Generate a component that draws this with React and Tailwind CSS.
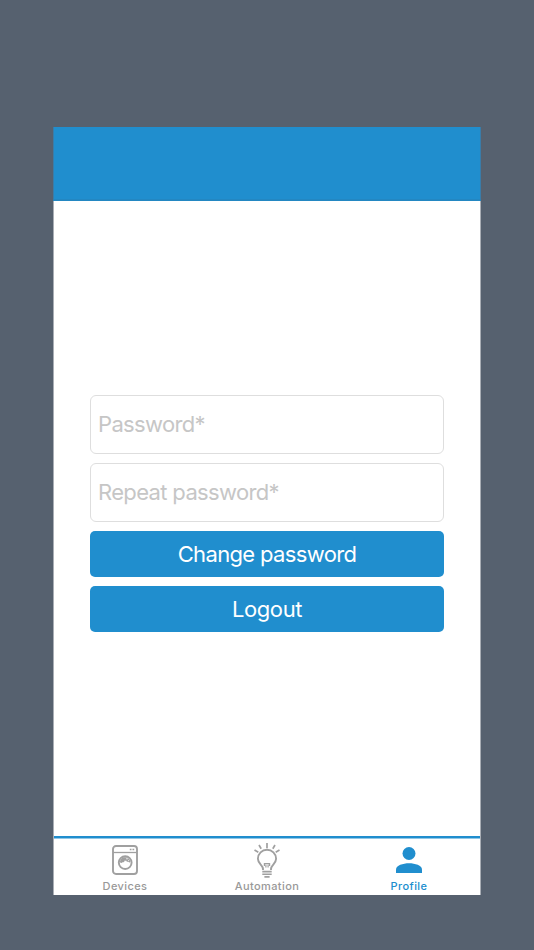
function DevicesIcon() {
  return (
    <svg className="-ml-px" width="26" height="30" viewBox="0 0 26 30" fill="none" stroke="#a0a0a0" strokeWidth="1.9">
      <rect x="1" y="1" width="24" height="28" rx="3" />
      <path d="M1 7.5H25" strokeWidth="1.3" />
      <path d="M17.800 4.500H19.500M20.500 4.500H22.200" strokeWidth="1.5" />
      <circle cx="13.200" cy="17.600" r="6.400" />
      <path d="M8 17.200C8 14.300 10.200 12.200 13 12.200C16 12.200 18.400 14.400 18.500 17C17.900 17.700 16.800 17.500 16.500 16.700C15.300 17.100 14.300 16.500 14.200 15.400C13.700 15.700 13.100 15.700 12.700 15.500C12.600 16.800 11.600 17.500 10.500 17.200C10 18.100 8.600 18.300 8 17.200Z" fill="#a0a0a0" stroke="none" />
      <circle cx="15" cy="13.800" r="0.700" fill="#ffffff" stroke="none" />
      <circle cx="16.700" cy="15.600" r="0.500" fill="#ffffff" stroke="none" />
    </svg>
  );
}

function AutomationIcon() {
  return (
    <svg width="26" height="36" viewBox="0 0 26 36" fill="none" stroke="#a0a0a0" strokeWidth="1.9">
      <path d="M13 1V6.200M5 3L7.200 6.800M21 3L18.800 6.800M.5 8L4.300 10.300M25.500 8L21.700 10.300" strokeWidth="1.700" />
      <path d="M9 28V26.800C8.700 23.200 3.900 21.700 3.900 16.800A9.100 9.100 0 0 1 22.100 16.800C22.100 21.700 17.300 23.200 17 26.800V28" />
      <path d="M11.900 25.600V22.200M14.100 25.600V22.200M10.400 24V21.500H15.600V24" strokeWidth="1.200" />
      <path d="M8.300 29.600H17.700M8.300 32.200H17.700M10.400 34.900H15.600" strokeWidth="1.600" />
    </svg>
  );
}

function ProfileIcon() {
  return (
    <svg width="26" height="26" viewBox="0 0 26 26" fill="#208ece">
      <circle cx="13" cy="6.500" r="6.500" />
      <path d="M0 26V22.500C0 18.400 7 16.200 13 16.200S26 18.400 26 22.500V26Z" />
    </svg>
  );
}

function Tab({ label, icon, active }) {
  return (
    <button className="flex flex-1 flex-col items-center">
      <span className="flex h-[39px] items-center justify-center pt-[5px]">{icon}</span>
      <span className={`mt-[2px] text-[11px] leading-[14px] font-medium tracking-[0.4px] ${active ? "text-[#208ece]" : "text-[#999999]"}`}>
        {label}
      </span>
    </button>
  );
}

function Field({ placeholder }) {
  return (
    <input
      type="text"
      placeholder={placeholder}
      className="block h-[59px] w-full rounded-[6px] border border-[#dedede] bg-white px-[7px] pb-[2px] text-[22px] tracking-[-0.65px] text-[#333333] placeholder:text-[#c6c6c6]"
    />
  );
}

function Button({ children, tracking }) {
  return (
    <button className={`h-[46px] w-full rounded-[5px] bg-[#208ece] text-[22px] leading-[46px] text-white ${tracking}`}>
      {children}
    </button>
  );
}

export default function App() {
  return (
    <div className="h-[950px] w-[534px] bg-[#56616f] pt-[127px] pl-[53px] font-['Inter','Liberation_Sans',sans-serif]">
      <div className="flex h-[768px] w-[428px] flex-col border-x border-[#a9aeb5] bg-white">
        <header className="-mx-px h-[74px] shrink-0 border-x border-b-2 border-x-[#3a7ca8] border-b-[#2387c2] bg-[#208ece]" />
        <main className="flex flex-1 flex-col px-9 pt-[194px]">
          <div className="flex flex-col gap-[9px]">
            <Field placeholder="Password*" />
            <Field placeholder="Repeat password*" />
            <Button tracking="tracking-[-0.65px]">Change password</Button>
            <Button tracking="tracking-[-0.4px]">Logout</Button>
          </div>
        </main>
        <nav className="flex h-[59px] shrink-0 border-t-2 border-[#208ece] shadow-[inset_0_1px_0_#90c7e7]">
          <Tab label="Devices" icon={<DevicesIcon />} />
          <Tab label="Automation" icon={<AutomationIcon />} />
          <Tab label="Profile" icon={<ProfileIcon />} active />
        </nav>
      </div>
    </div>
  );
}
